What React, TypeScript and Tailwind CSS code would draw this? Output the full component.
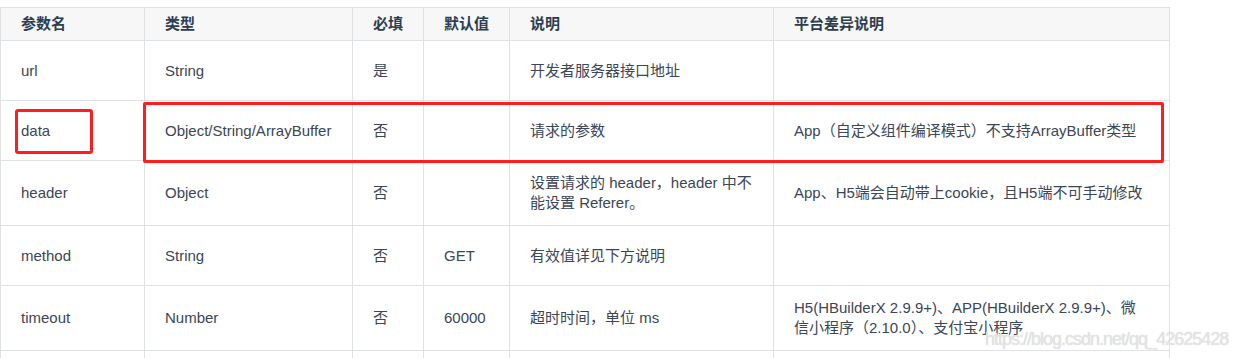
const font = "font-['Liberation_Sans','Noto_Sans_CJK_SC',sans-serif]";

const gridCols = "grid grid-cols-[144px_208px_71px_86px_264px_396px]";

type Row = { h: string; cells: React.ReactNode[] };

const rows: Row[] = [
    { h: "h-[60px]", cells: ["url", "String", "是", "", "开发者服务器接口地址", ""] },
    {
        h: "h-[60px]",
        cells: ["data", "Object/String/ArrayBuffer", "否", "", "请求的参数", "App（自定义组件编译模式）不支持ArrayBuffer类型"]
    },
    {
        h: "h-[65px]",
        cells: [
            "header",
            "Object",
            "否",
            "",
            <>
                设置请求的 header，header 中不
                <br />
                能设置 Referer。
            </>,
            "App、H5端会自动带上cookie，且H5端不可手动修改"
        ]
    },
    { h: "h-[60px]", cells: ["method", "String", "否", "GET", "有效值详见下方说明", ""] },
    {
        h: "h-[65px]",
        cells: [
            "timeout",
            "Number",
            "否",
            "60000",
            "超时时间，单位 ms",
            <>
                H5(HBuilderX 2.9.9+)、APP(HBuilderX 2.9.9+)、微
                <br />
                信小程序（2.10.0）、支付宝小程序
            </>
        ]
    },
    { h: "h-[60px]", cells: ["", "", "", "", "", ""] }
];

const headers = ["参数名", "类型", "必填", "默认值", "说明", "平台差异说明"];

export default function App() {
    return (
        <div className={`relative h-[358px] w-[1237px] overflow-hidden bg-white ${font}`}>
            <div className="mt-[7px] w-[1170px] border-l border-t border-[#dfe2e5] text-[15px] leading-[20px] text-[#2c3e50]">
                {/* header */}
                <div className={`${gridCols} h-[33px] bg-[#f7f7f7]`}>
                    {headers.map((h) => (
                        <div
                            key={h}
                            className="flex items-center whitespace-nowrap border-b border-r border-[#dfe2e5] px-5 font-bold"
                        >
                            {h}
                        </div>
                    ))}
                </div>

                {rows.map((row, i) => (
                    <div key={i} className={`${gridCols} ${row.h}`}>
                        {row.cells.map((c, j) => (
                            <div
                                key={j}
                                className="flex items-center whitespace-nowrap border-b border-r border-[#dfe2e5] px-5 text-[#3b4656]"
                            >
                                <span>{c}</span>
                            </div>
                        ))}
                    </div>
                ))}
            </div>

            {/* annotation boxes */}
            <div className="absolute left-[15px] top-[109px] h-[45px] w-[78px] rounded-[3px] border-[3px] border-[#ff1d1d]" />
            <div className="absolute left-[143px] top-[102px] h-[61px] w-[1021px] rounded-[2px] border-[3px] border-[#ff1d1d]" />

            {/* watermark */}
            <div className="absolute left-[985px] top-[328px] whitespace-nowrap text-[18px] leading-[22px] tracking-[-1px] text-[#e4e4e4] [text-shadow:0_0_1px_#d4d4d4] font-['Liberation_Sans',sans-serif]">
                https://blog.csdn.net/qq_42625428
            </div>
        </div>
    );
}
